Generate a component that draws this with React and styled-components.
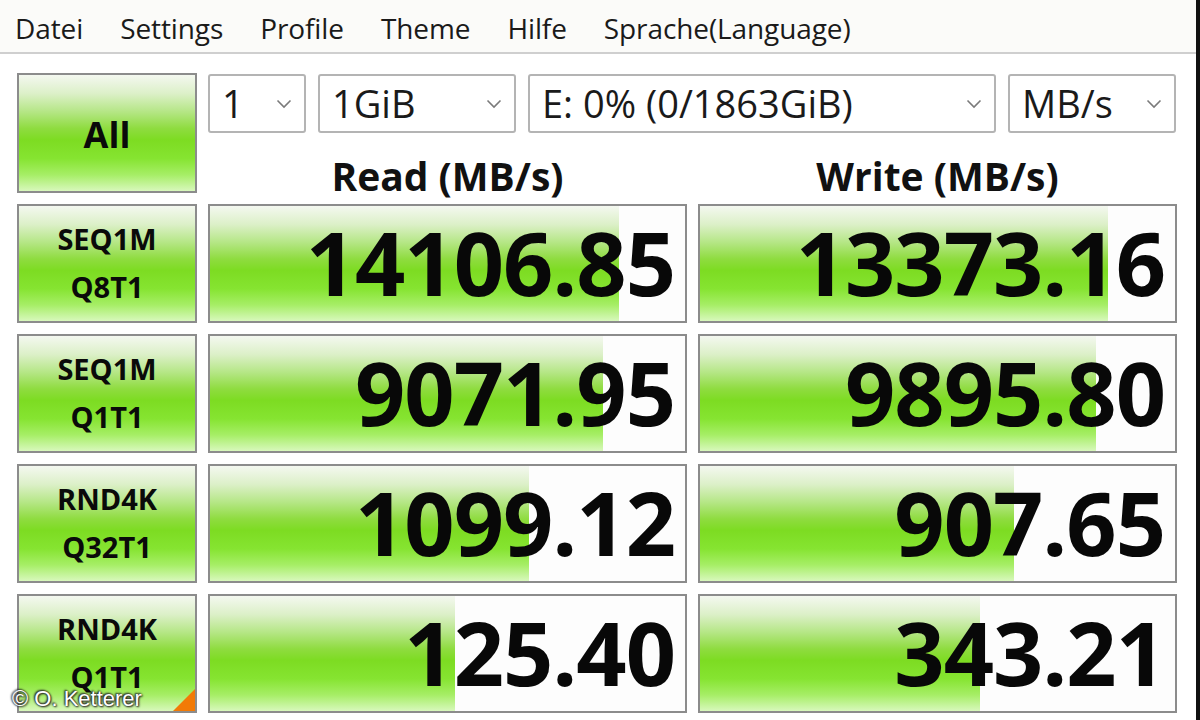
import React from "react";
import styled, { createGlobalStyle } from "styled-components";

const GlobalStyle = createGlobalStyle`
  html, body {
    margin: 0;
    padding: 0;
    background: #ffffff;
    font-family: "Open Sans", "Liberation Sans", sans-serif;
    color: #111;
  }
`;

const menu = ["Datei", "Settings", "Profile", "Theme", "Hilfe", "Sprache(Language)"];

const selects = [
  { label: "1", width: 98 },
  { label: "1GiB", width: 198 },
  { label: "E: 0% (0/1863GiB)", width: 468 },
  { label: "MB/s", width: 168 },
];

const rows = [
  { top: "SEQ1M", bottom: "Q8T1", read: "14106.85", readPct: 86.2, write: "13373.16", writePct: 85.8 },
  { top: "SEQ1M", bottom: "Q1T1", read: "9071.95", readPct: 82.8, write: "9895.80", writePct: 83.3 },
  { top: "RND4K", bottom: "Q32T1", read: "1099.12", readPct: 67.2, write: "907.65", writePct: 66.0 },
  { top: "RND4K", bottom: "Q1T1", read: "125.40", readPct: 51.5, write: "343.21", writePct: 58.9 },
];

const green = `linear-gradient(
  to bottom,
  #f4f8f0 0%,
  #dcf0c8 16%,
  #b4e684 32%,
  #8fdc40 46%,
  #7ddc22 56%,
  #86e431 72%,
  #a6ee66 86%,
  #d8f8bc 100%
)`;

const Chevron = () => (
  <svg width="16" height="10" viewBox="0 0 16 10">
    <path d="M1.5 1.5 L8 8 L14.5 1.5" fill="none" stroke="#7a7a7a" strokeWidth="1.6" />
  </svg>
);

export default function App() {
  return (
    <>
      <GlobalStyle />
      <Window>
        <MenuBar>
          {menu.map((m) => (
            <MenuItem key={m}>{m}</MenuItem>
          ))}
        </MenuBar>
        <Main>
          <AllButton>All</AllButton>
          <TopArea>
            <SelectRow>
              {selects.map((s) => (
                <Select key={s.label} $w={s.width}>
                  <span>{s.label}</span>
                  <Chevron />
                </Select>
              ))}
            </SelectRow>
            <Headers>
              <Header>Read (MB/s)</Header>
              <Header>Write (MB/s)</Header>
            </Headers>
          </TopArea>
          {rows.map((r, i) => (
            <React.Fragment key={i}>
              <LabelButton>
                <span>{r.top}</span>
                <span>{r.bottom}</span>
                {i === rows.length - 1 && <Corner />}
              </LabelButton>
              <Cell>
                <Bar style={{ width: `${r.readPct}%` }} />
                <Value>{r.read}</Value>
              </Cell>
              <Cell>
                <Bar style={{ width: `${r.writePct}%` }} />
                <Value>{r.write}</Value>
              </Cell>
            </React.Fragment>
          ))}
        </Main>
        <Watermark>© O. Ketterer</Watermark>
        <EdgeStrip />
      </Window>
    </>
  );
}

const Window = styled.div`
  position: relative;
  width: 1200px;
  height: 720px;
  overflow: hidden;
  background: #ffffff;
`;

const MenuBar = styled.div`
  display: flex;
  align-items: center;
  box-sizing: border-box;
  height: 54px;
  padding: 4px 0 0 15px;
  gap: 37px;
  background: #fbfbf9;
  border-bottom: 2px solid #cfcfcf;
`;

const MenuItem = styled.div`
  font-size: 28px;
  color: #1a1a1a;
  letter-spacing: -0.1px;
`;

const Main = styled.div`
  display: grid;
  grid-template-columns: 180px 479px 479px;
  grid-template-rows: 120px repeat(4, 119px);
  column-gap: 11px;
  row-gap: 11px;
  padding: 19px 0 0 17px;
`;

const GreenBox = styled.div`
  box-sizing: border-box;
  border: 2px solid #8c8c8c;
  background: ${green};
  color: #0a0a0a;
  font-weight: 700;
`;

const AllButton = styled(GreenBox)`
  display: flex;
  align-items: center;
  justify-content: center;
  font-size: 36px;
  padding-top: 2px;
`;

const TopArea = styled.div`
  grid-column: 2 / 4;
  display: flex;
  flex-direction: column;
`;

const SelectRow = styled.div`
  display: flex;
  gap: 12px;
  padding-top: 1px;
`;

const Select = styled.div`
  box-sizing: border-box;
  width: ${(p) => p.$w}px;
  height: 59px;
  border: 2px solid #b4b4b4;
  border-radius: 3px;
  background: #ffffff;
  display: flex;
  align-items: center;
  justify-content: space-between;
  padding: 0 12px 2px 12px;
  font-size: 38px;
  color: #1a1a1a;

  svg {
    flex-shrink: 0;
    margin-top: 2px;
  }
`;

const Headers = styled.div`
  display: grid;
  grid-template-columns: 479px 479px;
  column-gap: 11px;
  flex: 1;
  align-items: center;
`;

const Header = styled.div`
  text-align: center;
  font-size: 39px;
  font-weight: 700;
  color: #111;
  padding-top: 16px;
`;

const LabelButton = styled(GreenBox)`
  position: relative;
  display: flex;
  flex-direction: column;
  align-items: center;
  justify-content: center;
  gap: 4px;
  font-size: 29px;
  line-height: 44px;
  padding-bottom: 2px;
`;

const Corner = styled.div`
  position: absolute;
  right: 0;
  bottom: 0;
  width: 0;
  height: 0;
  border-left: 22px solid transparent;
  border-bottom: 22px solid #f27a06;
`;

const Cell = styled.div`
  position: relative;
  box-sizing: border-box;
  border: 2px solid #8c8c8c;
  background: #fdfdfd;
  display: flex;
  align-items: center;
  justify-content: flex-end;
`;

const Bar = styled.div`
  position: absolute;
  left: 0;
  top: 0;
  bottom: 0;
  background: ${green};
`;

const Value = styled.div`
  position: relative;
  font-size: 88px;
  font-weight: 700;
  letter-spacing: -1px;
  color: #080808;
  padding-right: 10px;
  line-height: 1.15;
  padding-bottom: 2px;
`;

const Watermark = styled.div`
  position: absolute;
  left: 12px;
  bottom: 8px;
  font-family: "Liberation Sans", Arial, sans-serif;
  font-size: 22px;
  color: #ffffff;
  text-shadow: 0 0 2px #222, 1px 1px 2px #222, -1px -1px 2px #222;
`;

const EdgeStrip = styled.div`
  position: absolute;
  right: 0;
  top: 0;
  width: 4px;
  height: 100%;
  background: #111;
`;
